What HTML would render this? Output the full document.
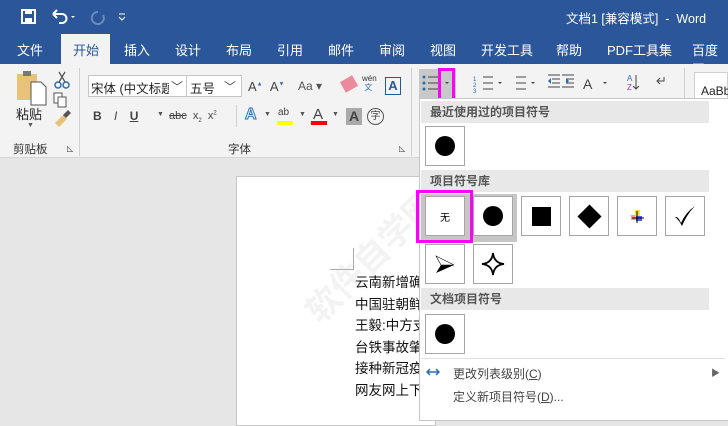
<!DOCTYPE html>
<html><head><meta charset="utf-8"><style>
*{margin:0;padding:0;box-sizing:border-box}
body{width:728px;height:420px;overflow:hidden;position:relative;background:#e6e6e6;font-family:"Liberation Sans","Noto Sans CJK SC",sans-serif;font-size:12px;color:#333}
.a{position:absolute}
.w{color:#fff}
.tab{position:absolute;top:40px;color:#fff;font-size:13px}
.box{position:absolute;width:40px;height:40px;border:1px solid #a6a6a6;background:#fff;display:flex;align-items:center;justify-content:center}
.hdr{position:absolute;left:421px;width:288px;height:22px;background:#e8e8e8;font-weight:bold;color:#555;padding-left:9px;line-height:22px;font-size:12px}
.dot{width:20px;height:20px;border-radius:50%;background:#000}
.gl{position:absolute;font-size:11.5px;color:#333}
</style></head><body>
<div class="a" style="left:0;top:0;width:728px;height:64px;background:#2b579a"></div>
<svg class="a" style="left:20px;top:8px" width="110" height="18">
<rect x="2" y="2" width="13" height="13" fill="none" stroke="#fff" stroke-width="2"/><rect x="5" y="2" width="7" height="4" fill="#fff"/><rect x="5" y="10" width="7" height="5" fill="#fff"/>
<path d="M33 6 h9 a4.5 4.5 0 0 1 0 9 h-3" fill="none" stroke="#fff" stroke-width="2"/><path d="M33 6 l4 -4 M33 6 l4 4" stroke="#fff" stroke-width="2"/>
<path d="M51 8 l2 2 l2 -2z" fill="#fff"/>
<path d="M78 4 a6 6 0 1 0 5 3" fill="none" stroke="#6d8bbd" stroke-width="2"/>
<path d="M99 6 h6 M99 9 l3 3 l3 -3" stroke="#fff" fill="none"/>
</svg>
<div class="a w" style="left:566px;top:8px;font-size:12.5px">文档1 [兼容模式] &nbsp;- &nbsp;Word</div>
<div class="a" style="left:61px;top:34px;width:49px;height:30px;background:#f3f3f3"></div>
<div class="tab" style="left:17px">文件</div>
<div class="tab" style="left:73px;color:#2b579a">开始</div>
<div class="tab" style="left:124px">插入</div>
<div class="tab" style="left:175px">设计</div>
<div class="tab" style="left:226px">布局</div>
<div class="tab" style="left:277px">引用</div>
<div class="tab" style="left:328px">邮件</div>
<div class="tab" style="left:379px">审阅</div>
<div class="tab" style="left:430px">视图</div>
<div class="tab" style="left:481px">开发工具</div>
<div class="tab" style="left:556px">帮助</div>
<div class="tab" style="left:607px">PDF工具集</div>
<div class="tab" style="left:692px">百度网</div>
<div class="a" style="left:0;top:64px;width:728px;height:94px;background:#f3f3f3;border-bottom:1px solid #d5d5d5"></div>
<div class="a" style="left:79px;top:68px;width:1px;height:88px;background:#d0d0d0"></div>
<div class="a" style="left:411px;top:68px;width:1px;height:88px;background:#d0d0d0"></div>
<div class="a" style="left:684px;top:68px;width:1px;height:40px;background:#d0d0d0"></div>
<svg class="a" style="left:14px;top:68px" width="60" height="62">
<rect x="3" y="6" width="20" height="26" fill="#e9c27a"/><rect x="9" y="3" width="8" height="5" fill="#777"/>
<path d="M17 14 h10 l5 5 v18 h-15z" fill="#fff" stroke="#555"/>
<circle cx="44" cy="17" r="3" fill="none" stroke="#2b6cb0" stroke-width="1.5"/><circle cx="52" cy="17" r="3" fill="none" stroke="#2b6cb0" stroke-width="1.5"/>
<path d="M45 14 l6 -10 M51 14 l-6 -10" stroke="#555" stroke-width="1.3"/>
<rect x="40" y="25" width="8" height="10" fill="#fff" stroke="#555"/><rect x="44" y="29" width="8" height="10" fill="#fff" stroke="#555"/>
<path d="M41 55 l8 -8 l4 4 l-8 8z" fill="#e9c27a"/><path d="M49 47 l5 -5 l3 3 l-5 5z" fill="#555"/>
</svg>
<div class="a" style="left:16px;top:104px;font-size:13px;color:#222">粘贴</div>
<div class="a" style="left:27px;top:122px;font-size:7px;color:#555">▼</div>
<div class="gl" style="left:13px;top:141px">剪贴板</div>
<div class="gl" style="left:67px;top:144px;font-size:8px">◺</div>
<div class="gl" style="left:228px;top:141px">字体</div>
<div class="gl" style="left:399px;top:144px;font-size:8px">◺</div>
<div class="a" style="left:88px;top:75px;width:154px;height:22px;background:#fff;border:1px solid #c6c6c6"></div>
<div class="a" style="left:186px;top:75px;width:1px;height:22px;background:#c6c6c6"></div>
<div class="a" style="left:91px;top:78px;font-size:12.5px;color:#222;width:78px;overflow:hidden;white-space:nowrap">宋体 (中文标题</div>
<div class="a" style="left:171px;top:78px;font-size:12px;color:#444">﹀</div>
<div class="a" style="left:190px;top:78px;font-size:12.5px;color:#222">五号</div>
<div class="a" style="left:224px;top:78px;font-size:12px;color:#444">﹀</div>
<div class="a" style="left:248px;top:79px;font-size:13px;color:#444">A<sup style="font-size:6px;color:#2b6cb0">▲</sup> &nbsp;A<sup style="font-size:6px;color:#2b6cb0">▼</sup></div>
<div class="a" style="left:298px;top:79px;font-size:12px;color:#555">Aa ▾</div>
<div class="a" style="left:342px;top:78px;width:14px;height:12px;background:#e98b9d;transform:rotate(-30deg)"></div>
<div class="a" style="left:362px;top:74px;font-size:8px;color:#333;line-height:9px">wén<br><span style="color:#2b6cb0">&nbsp;文</span></div>
<div class="a" style="left:385px;top:77px;width:16px;height:18px;border:1.5px solid #2b579a;font-size:13px;text-align:center;line-height:15px;font-weight:bold;color:#2b579a">A</div>
<div class="a" style="left:93px;top:109px;font-size:12px;color:#444;font-weight:bold;word-spacing:9px">B <i style="font-weight:normal">I</i> <u>U</u></div>
<div class="a" style="left:157px;top:111px;font-size:7px;color:#555">▼</div>
<div class="a" style="left:169px;top:110px;font-size:11px;color:#444"><s>abc</s> &nbsp;x<sub style="font-size:6px">2</sub> &nbsp;x<sup style="font-size:6px">2</sup></div>
<div class="a" style="left:236px;top:105px;width:1px;height:22px;background:#d0d0d0"></div>
<div class="a" style="left:245px;top:106px;font-size:16px;color:#fff;-webkit-text-stroke:1px #2b6cb0;font-weight:bold">A</div>
<div class="a" style="left:264px;top:111px;font-size:7px;color:#555">▼</div>
<div class="a" style="left:278px;top:107px;font-size:10px;color:#444">ab</div>
<div class="a" style="left:277px;top:121px;width:16px;height:4px;background:#ffff00"></div>
<div class="a" style="left:299px;top:111px;font-size:7px;color:#555">▼</div>
<div class="a" style="left:313px;top:106px;font-size:15px;color:#444">A</div>
<div class="a" style="left:311px;top:121px;width:16px;height:4px;background:#f00"></div>
<div class="a" style="left:332px;top:111px;font-size:7px;color:#555">▼</div>
<div class="a" style="left:346px;top:108px;width:16px;height:17px;background:#aaa;font-size:14px;font-weight:bold;text-align:center;color:#444;line-height:17px">A</div>
<div class="a" style="left:367px;top:108px;width:17px;height:17px;border:1.3px solid #555;border-radius:50%;font-size:10px;text-align:center;line-height:15px;color:#444">字</div>
<div class="a" style="left:419px;top:69px;width:37px;height:30px;background:#c8c8c8"></div>
<svg class="a" style="left:420px;top:72px" width="260" height="26">
<g fill="#2b6cb0"><circle cx="4" cy="5" r="1.5"/><circle cx="4" cy="11" r="1.5"/><circle cx="4" cy="17" r="1.5"/></g>
<g stroke="#444"><path d="M8 5h10M8 11h10M8 17h10"/><path d="M63 5h10M63 11h10M63 17h10M96 5h10M96 11h10M96 17h10"/></g>
<path d="M25 10l2 2l2-2z" fill="#444"/>
<text x="53" y="9" font-size="6" fill="#2b6cb0">1</text><text x="53" y="15" font-size="6" fill="#2b6cb0">2</text><text x="53" y="21" font-size="6" fill="#2b6cb0">3</text>
<path d="M78 10l2 2l2-2zM111 10l2 2l2-2z" fill="#444"/>
<g stroke="#444"><path d="M128 3h12M132 7h8M132 11h8M128 15h12M142 3h12M146 7h8M146 11h8M142 15h12"/></g>
<path d="M128 9l3-3v6zM149 9l-3-3v6z" fill="#2b6cb0"/>
<text x="163" y="17" font-size="14" fill="#444">A</text><path d="M183 10l2 2l2-2z" fill="#444"/>
<text x="207" y="9" font-size="8" fill="#2b6cb0">A</text><text x="207" y="18" font-size="8" fill="#8e44ad">Z</text><path d="M216 3v14M213 14l3 3l3-3" stroke="#444" fill="none"/>
<path d="M244 5v4h-7M240 6l-3 3l3 3" stroke="#444" fill="none"/>
</svg>
<div class="a" style="left:694px;top:72px;width:34px;height:40px;background:#fff;border:1px solid #d0d0d0;padding:11px 0 0 6px;font-size:12px;color:#222">AaBb</div>
<div class="a" style="left:438px;top:68px;width:17px;height:36px;border:3px solid #ff00ff"></div>
<div class="a" style="left:236px;top:176px;width:200px;height:250px;background:#fff;border:1px solid #c6c6c6"></div>
<div class="a" style="left:330px;top:248px;width:24px;height:22px;border-right:1px solid #aaa;border-bottom:1px solid #aaa"></div>
<div class="a" style="left:355px;top:272px;font-size:13.5px;line-height:21.5px;color:#111;width:70px;overflow:hidden;white-space:nowrap">云南新增确<br>中国驻朝鲜<br>王毅:中方支<br>台铁事故肇<br>接种新冠疫<br>网友网上下</div>
<div class="a" style="left:285px;top:230px;font-size:34px;color:rgba(200,200,200,.22);transform:rotate(-45deg);white-space:nowrap;font-weight:bold">软件自学网</div>
<div class="a" style="left:419px;top:98px;width:310px;height:323px;background:#fff;border:1px solid #c6c6c6"></div>
<div class="hdr" style="top:101px">最近使用过的项目符号</div>
<div class="box" style="left:425px;top:126px"><div class="dot"></div></div>
<div class="hdr" style="top:170px">项目符号库</div>
<div class="a" style="left:421px;top:194px;width:96px;height:48px;background:#c6c6c6"></div>
<div class="box" style="left:425px;top:196px;font-size:10px;color:#000">无</div>
<div class="box" style="left:473px;top:196px"><div class="dot"></div></div>
<div class="box" style="left:521px;top:196px"><div style="width:19px;height:19px;background:#000"></div></div>
<div class="box" style="left:569px;top:196px"><div style="width:17px;height:17px;background:#000;transform:rotate(45deg)"></div></div>
<div class="box" style="left:617px;top:196px"><svg width="16" height="16"><rect x="2" y="7" width="7" height="5" fill="#f66" opacity=".7"/><rect x="6" y="2" width="5" height="7" fill="#fd3"/><rect x="7" y="8" width="6" height="5" fill="#55f"/><path d="M8 3v12M3 10h12" stroke="#000"/></svg></div>
<div class="box" style="left:665px;top:196px"><svg width="24" height="24"><path d="M2 13 Q5 12 8 19 Q13 8 22 2 Q14 10 9 22 Q6 16 2 13z" fill="#000"/></svg></div>
<div class="a" style="left:416px;top:190px;width:57px;height:53px;border:3px solid #ff00ff"></div>
<div class="box" style="left:425px;top:244px"><svg width="20" height="20"><path d="M1 2 L19 11 L1 19 L6 11 Z" fill="#000"/><path d="M1 2 L19 11 L6 11z" fill="#fff" stroke="#000" stroke-width=".6"/></svg></div>
<div class="box" style="left:473px;top:244px"><svg width="24" height="24"><path d="M12 1 Q13 11 23 12 Q13 13 12 23 Q11 13 1 12 Q11 11 12 1z" fill="none" stroke="#000" stroke-width="1.8"/></svg></div>
<div class="hdr" style="top:288px">文档项目符号</div>
<div class="box" style="left:425px;top:314px"><div class="dot"></div></div>
<div class="a" style="left:421px;top:358px;width:304px;height:1px;background:#e0e0e0"></div>
<svg class="a" style="left:426px;top:367px" width="14" height="10"><path d="M1 5h12M4 2l-3 3l3 3M10 2l3 3l-3 3" stroke="#2b6cb0" stroke-width="1.5" fill="none"/></svg>
<div class="a" style="left:453px;top:365px;font-size:12px;color:#444">更改列表级别(<u>C</u>)</div>
<div class="a" style="left:711px;top:366px;font-size:9px;color:#666">▶</div>
<div class="a" style="left:453px;top:388px;font-size:12px;color:#444">定义新项目符号(<u>D</u>)...</div>
</body></html>
